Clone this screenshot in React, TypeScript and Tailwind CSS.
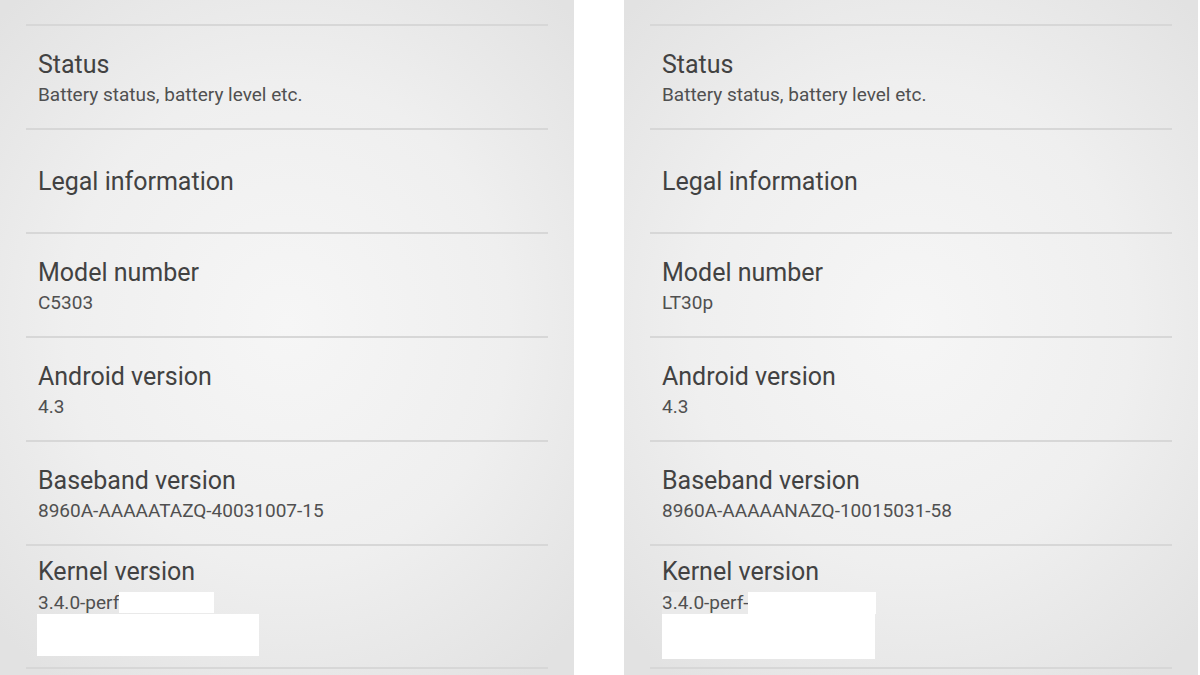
import React from "react";

type Row = { title: string; sub?: string };

function Panel({ rows, kernel }: { rows: Row[]; kernel: "left" | "right" }) {
  return (
    <div className="w-[574px] h-[675px] shrink-0 flex flex-col px-[26px] pt-[24px] bg-[radial-gradient(ellipse_70%_65%_at_50%_48%,#f6f6f6_0%,#efefef_55%,#e2e2e2_100%)]">
      {rows.map((r, i) =>
        r.sub ? (
          <div key={i} className="h-[104px] shrink-0 border-t-2 border-[#d7d7d7] pt-[25px] pl-[12px]">
            <div className="text-[25px] leading-[28px] text-[#424242]">{r.title}</div>
            <div className="mt-[5px] text-[19px] leading-[22px] text-[#505050]">{r.sub}</div>
          </div>
        ) : (
          <div key={i} className="h-[104px] shrink-0 border-t-2 border-[#d7d7d7] pt-[38px] pl-[12px]">
            <div className="text-[25px] leading-[28px] text-[#424242]">{r.title}</div>
          </div>
        )
      )}
      <div className="h-[125px] shrink-0 border-t-2 border-b-2 border-[#d7d7d7] pt-[12px] pl-[12px]">
        <div className="text-[25px] leading-[28px] text-[#424242]">Kernel version</div>
        {kernel === "left" ? (
          <>
            <div className="mt-[6px] text-[19px] leading-[22px] text-[#505050] flex items-start">
              <span>3.4.0-perf</span>
              <span className="inline-block w-[95px] h-[21px] bg-white" />
            </div>
            <div className="-ml-[1px] w-[222px] h-[42px] bg-white" />
          </>
        ) : (
          <>
            <div className="mt-[6px] text-[19px] leading-[22px] text-[#505050] flex items-start">
              <span className="bg-[#eaeaea]">3.4.0-perf-</span>
              <span className="inline-block w-[128px] h-[22px] bg-white" />
            </div>
            <div className="w-[213px] h-[45px] bg-white" />
          </>
        )}
      </div>
    </div>
  );
}

export default function App() {
  const left: Row[] = [
    { title: "Status", sub: "Battery status, battery level etc." },
    { title: "Legal information" },
    { title: "Model number", sub: "C5303" },
    { title: "Android version", sub: "4.3" },
    { title: "Baseband version", sub: "8960A-AAAAATAZQ-40031007-15" },
  ];
  const right: Row[] = [
    { title: "Status", sub: "Battery status, battery level etc." },
    { title: "Legal information" },
    { title: "Model number", sub: "LT30p" },
    { title: "Android version", sub: "4.3" },
    { title: "Baseband version", sub: "8960A-AAAAANAZQ-10015031-58" },
  ];
  return (
    <div className="w-[1200px] h-[675px] overflow-hidden bg-white flex gap-[50px] font-['Roboto',sans-serif]">
      <Panel rows={left} kernel="left" />
      <Panel rows={right} kernel="right" />
    </div>
  );
}
